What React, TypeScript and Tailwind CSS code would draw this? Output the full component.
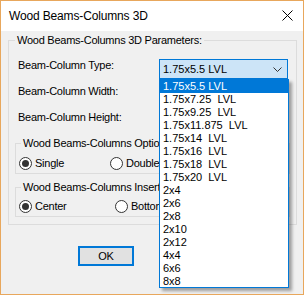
import React from "react";

const items = [
  "1.75x5.5 LVL",
  "1.75x7.25  LVL",
  "1.75x9.25  LVL",
  "1.75x11.875  LVL",
  "1.75x14  LVL",
  "1.75x16  LVL",
  "1.75x18  LVL",
  "1.75x20  LVL",
  "2x4",
  "2x6",
  "2x8",
  "2x10",
  "2x12",
  "4x4",
  "6x6",
  "8x8",
];

function Radio({ checked, label }: { checked?: boolean; label: string }) {
  return (
    <div className="flex items-center h-[13px]">
      <div className="w-[13px] h-[13px] rounded-full border border-[#333333] bg-white flex items-center justify-center">
        {checked && <div className="w-[7px] h-[7px] rounded-full bg-[#333333]" />}
      </div>
      <span className="ml-[3px] leading-[13px]">{label}</span>
    </div>
  );
}

export default function App() {
  return (
    <div
      className="relative w-[304px] h-[295px] border border-[#e8a75c] bg-[#f0f0f0] text-[11px] tracking-[-0.25px] text-black overflow-hidden"
      style={{ fontFamily: '"Liberation Sans", Arial, sans-serif' }}
    >
      <div className="h-[30px] bg-white flex items-center justify-between pl-[8px] pr-[10px]">
        <span className="text-[12px] leading-[14px] tracking-[-0.15px] -mt-[1px]">Wood Beams-Columns 3D</span>
        <svg width="11" height="11" viewBox="0 0 11 11" className="-mt-[1px]">
          <path d="M0.5 0.5 L10.5 10.5 M10.5 0.5 L0.5 10.5" stroke="#000" strokeWidth="1" />
        </svg>
      </div>

      <div className="flex flex-col">
        <fieldset className="mt-[3px] ml-[7px] mr-[6px] border border-[#dcdcdc] pb-[7px]">
          <legend className="ml-[6px] px-[2px] leading-[13px]">Wood Beams-Columns 3D Parameters:</legend>
          <div className="flex flex-col gap-[6px] pt-[12px]">
            <div className="flex items-start h-[20px]">
              <span className="w-[150px] pl-[9px] leading-[13px]">Beam-Column Type:</span>
              <div className="w-[129px] h-[20px] border border-[#0078d7] bg-[#cce4f7] flex items-center justify-between pl-[3px] pr-[5px]">
                <span className="leading-[13px] tracking-normal">1.75x5.5 LVL</span>
                <svg width="9" height="5" viewBox="0 0 9 5">
                  <path d="M0.5 0.5 L4.5 4.5 L8.5 0.5" stroke="#333" strokeWidth="1" fill="none" />
                </svg>
              </div>
            </div>
            <div className="flex items-start h-[20px]">
              <span className="w-[150px] pl-[9px] leading-[13px]">Beam-Column Width:</span>
              <div className="w-[129px] h-[20px] border border-[#7a7a7a] bg-white" />
            </div>
            <div className="flex items-start h-[20px]">
              <span className="w-[150px] pl-[9px] leading-[13px]">Beam-Column Height:</span>
              <div className="w-[129px] h-[20px] border border-[#7a7a7a] bg-white" />
            </div>
          </div>

          <fieldset className="mt-[6px] ml-[6px] mr-[6px] border border-[#dcdcdc] pb-[3px]">
            <legend className="ml-[5px] px-[2px] leading-[13px]">Wood Beams-Columns Options</legend>
            <div className="flex pt-[7px] pl-[3px]">
              <div className="w-[91px]">
                <Radio checked label="Single" />
              </div>
              <Radio label="Double" />
            </div>
          </fieldset>

          <fieldset className="mt-[7px] ml-[6px] mr-[6px] border border-[#dcdcdc] pb-[3px]">
            <legend className="ml-[5px] px-[2px] leading-[13px]">Wood Beams-Columns Insert</legend>
            <div className="flex pt-[6px] pl-[3px]">
              <div className="w-[96px]">
                <Radio checked label="Center" />
              </div>
              <Radio label="Bottom" />
            </div>
          </fieldset>
        </fieldset>

        <div className="flex mt-[21px] ml-[77px] gap-[37px]">
          <button className="w-[56px] h-[20px] border-2 border-[#0078d7] bg-[#e1e1e1] text-[11px] leading-[13px] flex items-center justify-center">
            OK
          </button>
          <button className="w-[56px] h-[20px] border border-[#adadad] bg-[#e1e1e1] text-[11px] leading-[13px] flex items-center justify-center">
            Cancel
          </button>
        </div>
      </div>

      <div className="absolute left-[158px] top-[78px] w-[130px] h-[209px] border border-[#0078d7] bg-white shadow-[3px_3px_3px_rgba(0,0,0,0.35)] flex flex-col tracking-normal">
        {items.map((t, i) => (
          <div
            key={t}
            className={
              i === 0
                ? "h-[13px] leading-[13px] pl-[3px] bg-[#0078d7] text-white whitespace-pre"
                : "h-[13px] leading-[13px] pl-[3px] whitespace-pre"
            }
          >
            {t}
          </div>
        ))}
      </div>
    </div>
  );
}
